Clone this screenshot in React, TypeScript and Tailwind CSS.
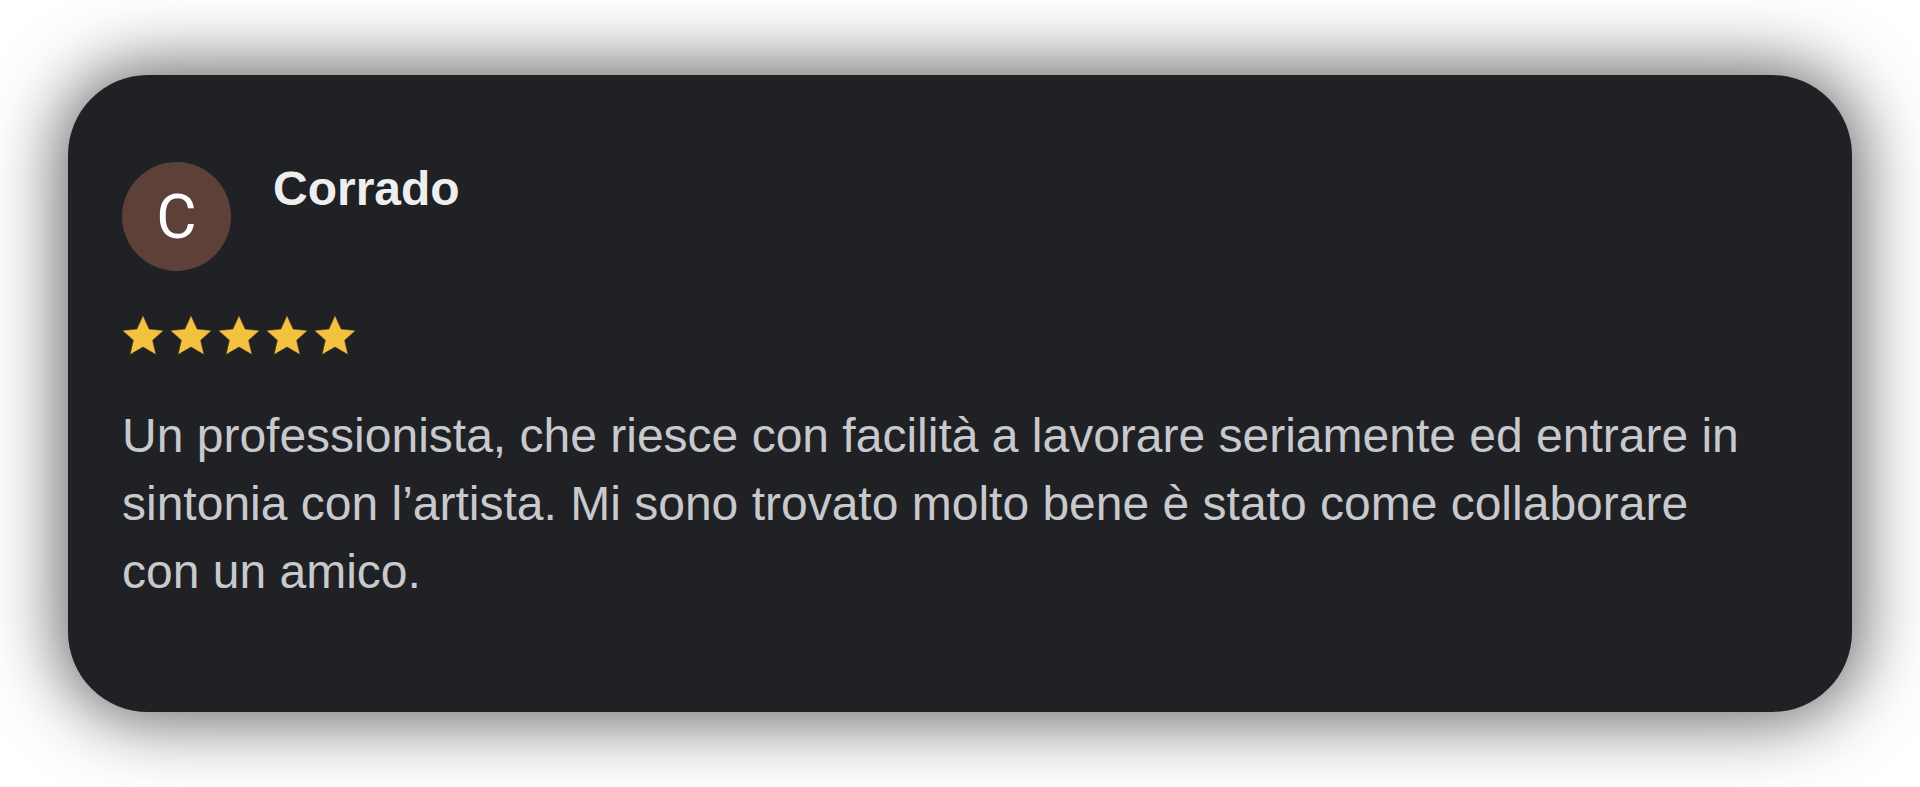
import React from 'react';

const Star: React.FC = () => (
  <svg viewBox="1.3 1.3 21.4 20.4" className="w-[42px] h-[40px]">
    <path
      d="M12 1.6l3.1 6.9 7.4.7-5.6 5 1.7 7.3L12 17.6l-6.6 3.9 1.7-7.3-5.6-5 7.4-.7z"
      fill="#f4c13e"
      stroke="#3a3320"
      strokeWidth="0.25"
      strokeLinejoin="round"
    />
  </svg>
);

const App: React.FC = () => {
  return (
    <div className="min-h-screen w-full bg-white flex items-center justify-center">
      <div className="w-[1784px] rounded-[80px] bg-[#202124] pt-[87px] pb-[106px] pl-[54px] pr-[100px] shadow-[0_0_70px_8px_rgba(0,0,0,0.62)] font-['Liberation_Sans',Arial,sans-serif]">
        {/* header */}
        <div className="flex items-start">
          <div className="w-[109px] h-[109px] rounded-full bg-[#5d4037] flex items-center justify-center shrink-0">
            <span className="text-white text-[62px] leading-none font-['Roboto',sans-serif]">C</span>
          </div>
          <div className="ml-[42px] mt-[3px] text-[48px] leading-none font-bold text-[#eeeeee]">Corrado</div>
        </div>

        {/* rating */}
        <div className="flex gap-[6px] mt-[44px]">
          {[0, 1, 2, 3, 4].map((i) => (
            <Star key={i} />
          ))}
        </div>

        <p className="mt-[47px] text-[48px] leading-[68px] text-[#c8c9cc]">
          Un professionista, che riesce con facilità a lavorare seriamente ed entrare in sintonia con l’artista. Mi sono trovato molto bene è stato come collaborare con un amico.
        </p>
      </div>
    </div>
  );
};

export default App;
